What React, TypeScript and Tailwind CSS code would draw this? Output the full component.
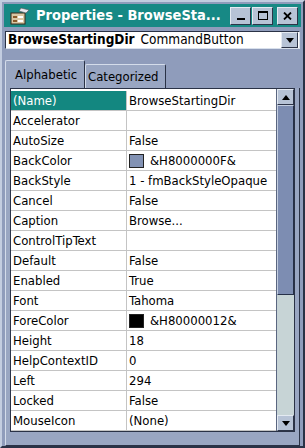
import { FC } from "react";

type Row = { name: string; value: string; swatch?: string };

const rows: Row[] = [
	{ name: "(Name)", value: "BrowseStartingDir" },
	{ name: "Accelerator", value: "" },
	{ name: "AutoSize", value: "False" },
	{ name: "BackColor", value: "&H8000000F&", swatch: "#8292b4" },
	{ name: "BackStyle", value: "1 - fmBackStyleOpaque" },
	{ name: "Cancel", value: "False" },
	{ name: "Caption", value: "Browse..." },
	{ name: "ControlTipText", value: "" },
	{ name: "Default", value: "False" },
	{ name: "Enabled", value: "True" },
	{ name: "Font", value: "Tahoma" },
	{ name: "ForeColor", value: "&H80000012&", swatch: "#000000" },
	{ name: "Height", value: "18" },
	{ name: "HelpContextID", value: "0" },
	{ name: "Left", value: "294" },
	{ name: "Locked", value: "False" },
	{ name: "MouseIcon", value: "(None)" },
];

const font = "font-['DejaVu_Sans_Condensed','DejaVu_Sans',sans-serif]";

const WinButton: FC<{ children: React.ReactNode }> = ({ children }) => (
	<div className="w-[21px] h-[18px] bg-[#b7c3d6] border border-t-[#e4eaf2] border-l-[#e4eaf2] border-r-[#2c3448] border-b-[#2c3448] flex items-center justify-center">
		{children}
	</div>
);

const ArrowButton: FC<{ up?: boolean }> = ({ up }) => (
	<div className="w-[17px] h-[16px] bg-[#b7c3d6] border border-t-[#e4eaf2] border-l-[#e4eaf2] border-r-[#2c3448] border-b-[#2c3448] flex items-center justify-center">
		<svg width="8" height="5" viewBox="0 0 8 5">
			{up ? <path d="M4 0 L8 5 L0 5 Z" fill="#000" /> : <path d="M0 0 L8 0 L4 5 Z" fill="#000" />}
		</svg>
	</div>
);

export default function App() {
	return (
		<div className={`w-[305px] h-[448px] bg-[#8f9cbb] border-2 border-t-[#c3cde0] border-l-[#c3cde0] border-r-[#2a3246] border-b-[#2a3246] flex flex-col ${font}`}>
			{/* Title bar */}
			<div className="mx-[2px] mt-[2px] h-[23px] bg-[#178985] flex items-center pl-[6px] pr-[3px]">
				<svg width="20" height="18" viewBox="0 0 20 18" className="shrink-0">
					<rect x="1" y="6" width="14" height="11" fill="#d9c7a3" stroke="#3a2a1a" strokeWidth="1" />
					<rect x="3" y="9" width="4" height="2" fill="#8a5a2a" />
					<rect x="3" y="13" width="4" height="2" fill="#8a5a2a" />
					<rect x="8" y="9" width="5" height="2" fill="#fff" />
					<rect x="8" y="13" width="5" height="2" fill="#fff" />
					<path d="M11 1 L19 3 L16 6 L9 4 Z" fill="#e8e8f0" stroke="#555" strokeWidth="0.6" />
				</svg>
				<span className="ml-[6px] text-white font-bold text-[14.5px] leading-none whitespace-nowrap flex-1">Properties - BrowseSta...</span>
				<div className="flex items-center">
					<WinButton>
						<div className="w-[8px] h-[2px] bg-black mt-[7px]" />
					</WinButton>
					<div className="ml-[1px]">
						<WinButton>
							<div className="w-[10px] h-[9px] border border-black border-t-2" />
						</WinButton>
					</div>
					<div className="ml-[4px]">
						<WinButton>
							<svg width="9" height="8" viewBox="0 0 9 8">
								<path d="M1 0.5 L8 7.5 M8 0.5 L1 7.5" stroke="#000" strokeWidth="1.8" />
							</svg>
						</WinButton>
					</div>
				</div>
			</div>

			{/* Object combo */}
			<div className="mx-[3px] mt-[4px] h-[18px] bg-white border border-t-[#2a3246] border-l-[#2a3246] border-r-[#d8e0ec] border-b-[#d8e0ec] flex items-center pl-[2px] pr-[1px]">
				<span className="font-bold text-[13.5px] text-black leading-none">BrowseStartingDir</span>
				<span className="ml-[6px] text-[13.5px] text-black leading-none flex-1">CommandButton</span>
				<ArrowButton />
			</div>

			{/* Tabs */}
			<div className="mt-[11px] ml-[3px] flex items-end h-[28px]">
				<div className="w-[80px] h-[28px] bg-[#99a6c2] border border-b-0 border-t-[#d4dcea] border-l-[#d4dcea] border-r-[#2a3246] rounded-t-[2px] flex items-center pl-[9px] text-[13px] text-black">
					Alphabetic
				</div>
				<div className="w-[81px] h-[24px] bg-[#99a6c2] border border-b-0 border-t-[#d4dcea] border-l-[#d4dcea] border-r-[#2a3246] rounded-t-[2px] flex items-center pl-[2px] text-[13px] text-black">
					Categorized
				</div>
			</div>

			{/* Grid panel */}
			<div className="mx-[3px] bg-[#99a6c2] border border-t-0 border-l-[#d4dcea] border-r-[#2a3246] border-b-[#2a3246] px-[4px] pb-[5px] flex-1 flex flex-col">
				<div className="flex border border-[#2a3246] bg-white">
					<div className="flex-1 flex flex-col pt-[2px]">
						{rows.map((r, i) => (
							<div key={r.name} className="flex h-[20px] border-b border-[#c4c4c4] text-[13px] text-black leading-none">
								<div className={`w-[116px] flex items-center pl-[2px] border-r border-[#c4c4c4] ${i === 0 ? "bg-[#138780] text-white" : ""}`}>
									{r.name}
								</div>
								<div className="flex-1 flex items-center pl-[2px] whitespace-nowrap overflow-hidden">
									{r.swatch && (
										<div className="w-[15px] h-[14px] border border-[#222] mr-[6px] shrink-0" style={{ backgroundColor: r.swatch }} />
									)}
									{r.value}
								</div>
							</div>
						))}
					</div>
					{/* Scrollbar */}
					<div className="w-[18px] flex flex-col border-l border-[#5a6680]">
						<ArrowButton up />
						<div className="h-[190px] bg-[#7d8db2] border border-t-[#c4cee0] border-l-[#c4cee0] border-r-[#263048] border-b-[#263048]" />
						<div className="flex-1 bg-[#c7d4d6]" />
						<ArrowButton />
					</div>
				</div>
			</div>
		</div>
	);
}
